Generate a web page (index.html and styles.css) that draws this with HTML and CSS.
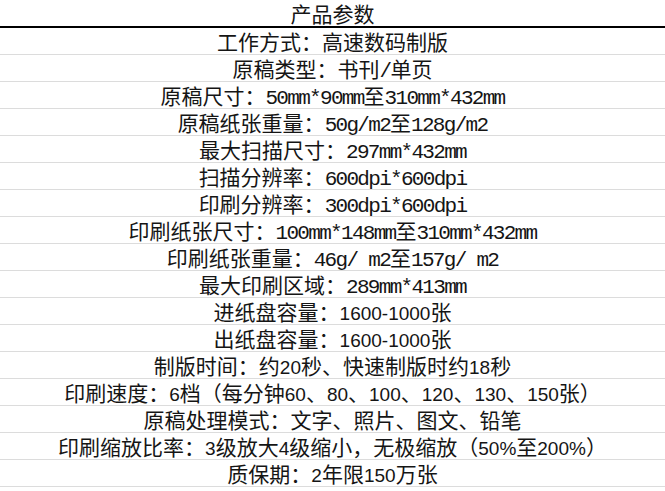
FILE: index.html
```html
<!DOCTYPE html>
<html lang="zh-CN">
<head>
<meta charset="utf-8">
<title>产品参数</title>
<link rel="stylesheet" href="styles.css">
</head>
<body>
<table class="spec">
  <thead>
    <tr><th>产品参数</th></tr>
  </thead>
  <tbody>
    <tr><td>工作方式：高速数码制版</td></tr>
    <tr><td>原稿类型：书刊<span class="m">/</span>单页</td></tr>
    <tr><td>原稿尺寸：<span class="m">50mm*90mm</span>至<span class="m">310mm*432mm</span></td></tr>
    <tr><td>原稿纸张重量：<span class="m">50g/m2</span>至<span class="m">128g/m2</span></td></tr>
    <tr><td>最大扫描尺寸：<span class="m">297mm*432mm</span></td></tr>
    <tr><td>扫描分辨率：<span class="m">600dpi*600dpi</span></td></tr>
    <tr><td>印刷分辨率：<span class="m">300dpi*600dpi</span></td></tr>
    <tr><td>印刷纸张尺寸：<span class="m">100mm*148mm</span>至<span class="m">310mm*432mm</span></td></tr>
    <tr><td>印刷纸张重量：<span class="m">46g/ m2</span>至<span class="m">157g/ m2</span></td></tr>
    <tr><td>最大印刷区域：<span class="m">289mm*413mm</span></td></tr>
    <tr><td>进纸盘容量：<span class="s">1600-1000</span>张</td></tr>
    <tr><td>出纸盘容量：<span class="s">1600-1000</span>张</td></tr>
    <tr><td>制版时间：约<span class="s">20</span>秒、快速制版时约<span class="s">18</span>秒</td></tr>
    <tr><td>印刷速度：<span class="s">6</span>档（每分钟<span class="s">60</span>、<span class="s">80</span>、<span class="s">100</span>、<span class="s">120</span>、<span class="s">130</span>、<span class="s">150</span>张）</td></tr>
    <tr><td>原稿处理模式：文字、照片、图文、铅笔</td></tr>
    <tr><td>印刷缩放比率：<span class="s">3</span>级放大<span class="s">4</span>级缩小，无极缩放（<span class="s">50%</span>至<span class="s">200%</span>）</td></tr>
    <tr><td>质保期：<span class="s">2</span>年限<span class="s">150</span>万张</td></tr>
  </tbody>
</table>
</body>
</html>
```
FILE: styles.css
```css
html, body {
  margin: 0;
  padding: 0;
  background: #ffffff;
}

body {
  font-family: "Noto Sans CJK SC", "Noto Sans", sans-serif;
  font-size: 21px;
  color: #151515;
}

.spec {
  width: 100%;
  border-collapse: collapse;
  border-spacing: 0;
}

.spec th,
.spec td {
  padding: 0;
  height: 26px;
  line-height: 26px;
  text-align: center;
  white-space: nowrap;
  font-weight: normal;
  overflow: hidden;
}

.spec th {
  border-bottom: 2px solid #000000;
}

.spec td {
  border-bottom: 1px solid #dcdcdc;
}

.m {
  font-family: "Liberation Mono", monospace;
  font-size: 21px;
  letter-spacing: -1.7px;
  line-height: 0;
}

.s {
  font-family: "Liberation Sans", sans-serif;
  font-size: 19px;
  line-height: 0;
}
```
